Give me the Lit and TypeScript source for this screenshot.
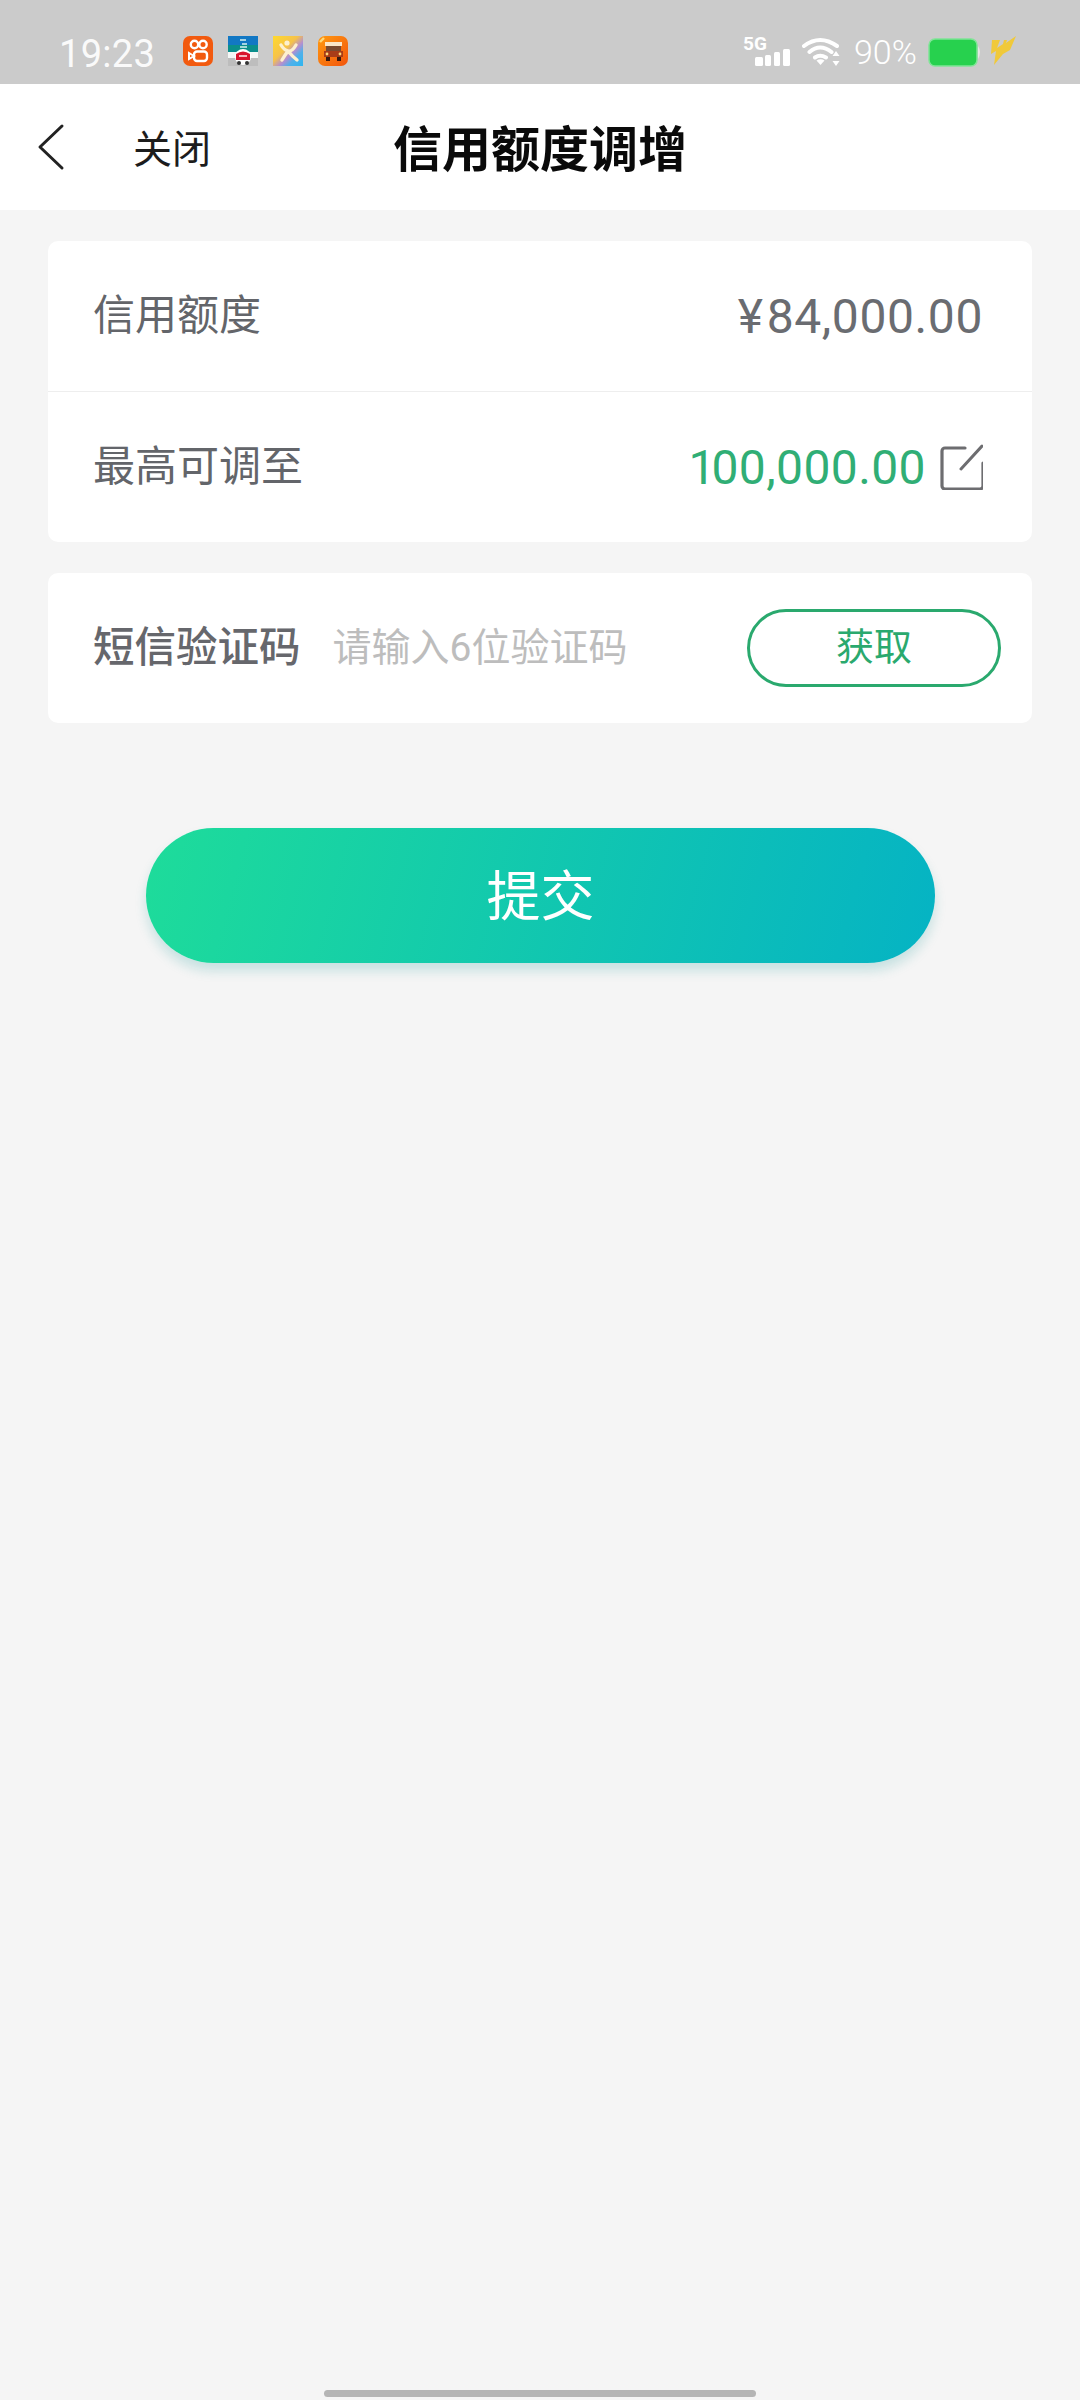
import { LitElement, html, css } from "lit";
import { customElement } from "lit/decorators.js";

@customElement("app-root")
export class AppRoot extends LitElement {
  static styles = css`
    :host { display: block; width: 1080px; height: 2400px; position: relative; background: #f5f5f5; overflow: hidden;
      font-family: Roboto, "Noto Sans CJK SC", sans-serif; }
    * { box-sizing: border-box; }
    .status { height: 84px; background: #cbcbcb; display: flex; align-items: flex-start; color: #fff; position: relative; }
    .time { font-size: 38px; margin-left: 59px; width: 124px; letter-spacing: 0.3px; font-weight: 400; line-height: 1; padding-top: 35px; opacity: .92; }
    .apps { display: flex; gap: 15px; margin-top: 36px; }
    .apps svg { width: 30px; height: 30px; display: block; }
    .sright { position: absolute; left: 740px; top: 30px; width: 285px; height: 40px; display: flex; align-items: flex-start; }
    .sright svg { display: block; flex: none; }
    .wifi { margin-left: 12px; }
    .pct { font-size: 34px; font-weight: 300; margin-left: 10px; width: 74px; line-height: 1; padding-top: 5px; }
    .nav { height: 126px; background: #fff; display: flex; align-items: center; position: relative; }
    .back { width: 30px; height: 48px; margin-left: 36px; }
    .close { font-size: 39px; color: #1c1c1c; margin-left: 67px; line-height: 1; padding-top: 6px; }
    .title { position: absolute; left: 0; right: 0; top: 42px; text-align: center; font-size: 49px; font-weight: 700; color: #0a0a0a; line-height: 1; }
    .content { padding: 31px 48px 0 48px; display: flex; flex-direction: column; gap: 31px; }
    .card { background: #fff; border-radius: 10px; }
    .row { height: 150px; padding: 0 49px 0 45px; display: flex; align-items: center; justify-content: space-between; font-size: 42px; color: #63656a; }
    .row + .row { border-top: 1px solid #eeeeee; height: 151px; }
    .label { line-height: 1; }
    .amt { font-size: 48px; line-height: 1; font-weight: 400; letter-spacing: 0.6px; padding-top: 2px; color: #6a6c71; }
    .yen { margin-right: 3px; }
    .one { letter-spacing: -4px; }
    .amt.green { color: #30ae75; letter-spacing: 0.4px; }
    .val { display: flex; align-items: center; gap: 13px; }
    .edit { width: 44px; height: 46px; display: block; flex: none; }
    .sms { height: 150px; padding: 0 31px 0 45px; display: flex; align-items: center; }
    .sms .label { font-size: 41.500px; color: #66676c; font-weight: 500; }
    .ph { font-size: 39px; color: #bdbdbd; margin-left: 32px; flex: 1; line-height: 1; }
    .get { width: 254px; height: 78px; border: 3px solid #2aa96e; border-radius: 39px; color: #2aa96e; font-size: 38px; line-height: 1; padding-bottom: 3px; display: flex; align-items: center; justify-content: center; }
    .submit-wrap { padding: 105px 145px 0 146px; }
    .submit { height: 135px; border-radius: 68px; color: #fff; font-size: 54px; line-height: 1; padding-top: 5px; display: flex; align-items: center; justify-content: center;
      background: linear-gradient(105deg, #1edc9a 0%, #05b3c4 100%); box-shadow: 0 8px 12px rgba(20, 150, 150, .2); }
    .home { position: absolute; left: 324px; top: 2390px; width: 432px; height: 7px; border-radius: 4px; background: #b5b5b5; }
  `;

  render() {
    return html`
      <div class="status">
        <div class="time">19:23</div>
        <div class="apps">
          <svg viewBox="0 0 30 30">
            <rect width="30" height="30" rx="7" fill="#f25a0f"/>
            <circle cx="11.500" cy="8.500" r="3.700" fill="none" stroke="#fff" stroke-width="2.400"/>
            <circle cx="20" cy="8.500" r="3.700" fill="none" stroke="#fff" stroke-width="2.400"/>
            <rect x="11" y="15.500" width="13" height="9.500" rx="3" fill="none" stroke="#fff" stroke-width="2.400"/>
            <path d="M11 20 6 17v6z" fill="none" stroke="#fff" stroke-width="2"/>
          </svg>
          <svg viewBox="0 0 30 30">
            <rect width="30" height="9" fill="#1278c4"/>
            <rect y="9" width="30" height="7" fill="#0b8f8c"/>
            <rect y="16" width="30" height="6" fill="#f4f7f6"/>
            <rect y="22" width="30" height="8" fill="#bdbdbd"/>
            <path d="M12 4h6M14 8h5M12 11h7" stroke="#d8f2ee" stroke-width="1.400"/>
            <circle cx="15" cy="21" r="8" fill="#fff"/>
            <path d="M8 18q7-5 14 0v6H8z" fill="#d8152e"/>
            <path d="M11 20h8" stroke="#fff" stroke-width="1.400"/>
            <circle cx="11" cy="27" r="2" fill="#333"/><circle cx="19" cy="27" r="2" fill="#333"/>
          </svg>
          <svg viewBox="0 0 30 30">
            <defs><linearGradient id="x" x1="0" y1="0" x2="1" y2="1">
              <stop offset="0" stop-color="#ffd92e"/><stop offset=".42" stop-color="#f6c24a"/>
              <stop offset=".6" stop-color="#b48fd0"/><stop offset=".75" stop-color="#4fb0ea"/><stop offset="1" stop-color="#2cb6f0"/>
            </linearGradient></defs>
            <rect width="30" height="30" fill="url(#x)"/>
            <path d="M8 9q3 5 7 6t8-6M15 15q-3 4-6 9M15 15q4 5 9 9" fill="none" stroke="#fdf0d0" stroke-width="3.400" stroke-linecap="round"/>
            <circle cx="14" cy="7" r="2.600" fill="#fdf0d0"/>
          </svg>
          <svg viewBox="0 0 30 30">
            <defs><linearGradient id="y" x1="0" y1="0" x2="1" y2="1">
              <stop offset="0" stop-color="#ff9a10"/><stop offset="1" stop-color="#f2540c"/>
            </linearGradient></defs>
            <rect width="30" height="30" rx="7" fill="url(#y)"/>
            <path d="M2 6l4-4" stroke="#ffd97a" stroke-width="2.400"/>
            <rect x="7" y="6" width="17" height="4" fill="#fbe6c8"/>
            <rect x="8" y="10" width="15" height="5" fill="#7a4a30"/>
            <rect x="6" y="15" width="19" height="6" fill="#a93c18"/>
            <circle cx="9" cy="18" r="1.400" fill="#ffd97a"/><circle cx="22" cy="18" r="1.400" fill="#ffd97a"/>
            <rect x="8" y="21" width="4" height="4" fill="#3a1a10"/><rect x="19" y="21" width="4" height="4" fill="#3a1a10"/>
          </svg>
        </div>
        <div class="sright">
          <svg width="50" height="40" viewBox="0 0 50 40">
            <text x="3" y="20" font-family="Roboto" font-size="19" font-weight="700" fill="#fff">5G</text>
            <rect x="15" y="27" width="8" height="9" rx="1.500" fill="#fff"/>
            <rect x="25" y="25" width="6" height="11" rx="1.500" fill="#fff"/>
            <rect x="34" y="22" width="6" height="14" rx="1.500" fill="#fff"/>
            <rect x="43" y="19" width="7" height="17" rx="1.500" fill="#fff"/>
          </svg>
          <svg class="wifi" width="42" height="40" viewBox="0 0 42 40">
            <path d="M2 16Q18 4 35 16M7.500 22Q18 13 29.500 22M13 27.500Q18 24 24 27.500" fill="none" stroke="#fff" stroke-width="4" stroke-linecap="round"/>
            <path d="M14.500 30.500q4-2.500 8 0l-4 4.500z" fill="#fff"/>
            <path d="M34 21l3.500 5h-7zM34 36l3.500-5h-7z" fill="#fff"/>
          </svg>
          <div class="pct">90%</div>
          <svg width="92" height="40" viewBox="0 0 92 40">
            <rect x="1" y="9" width="48" height="27" rx="6" fill="#27d14e" stroke="#7fe596" stroke-width="1.500"/>
            <path d="M50 16q4 6 0 13z" fill="#e6e6e6"/>
            <path d="M64 10h8l-3 8 6-4 1-4h3l-1 3 10-7-6 14-7 4-9 11 2-14-5 3z" fill="#f0c93a"/>
          </svg>
        </div>
      </div>

      <div class="nav">
        <svg class="back" viewBox="0 0 30 48">
          <path d="M26 3 4 24l22 21" fill="none" stroke="#222" stroke-width="3" stroke-linecap="round" stroke-linejoin="round"/>
        </svg>
        <div class="close">关闭</div>
        <div class="title">信用额度调增</div>
      </div>

      <div class="content">
        <div class="card">
          <div class="row">
            <div class="label">信用额度</div>
            <div class="amt"><span class="yen">¥</span>84,000.00</div>
          </div>
          <div class="row">
            <div class="label">最高可调至</div>
            <div class="val">
              <div class="amt green"><span class="one">1</span>00,000.00</div>
              <svg class="edit" viewBox="0 0 44 46">
                <path d="M26 4H6a3 3 0 0 0-3 3v35a3 3 0 0 0 3 3h35a3 3 0 0 0 3-3V19" fill="none" stroke="#6d6d70" stroke-width="3.200" stroke-linecap="round"/>
                <path d="M22 25 43 2" fill="none" stroke="#6d6d70" stroke-width="3" stroke-linecap="round"/>
              </svg>
            </div>
          </div>
        </div>

        <div class="card">
          <div class="sms">
            <div class="label">短信验证码</div>
            <div class="ph">请输入6位验证码</div>
            <div class="get">获取</div>
          </div>
        </div>
      </div>

      <div class="submit-wrap"><div class="submit">提交</div></div>
      <div class="home"></div>
    `;
  }
}
